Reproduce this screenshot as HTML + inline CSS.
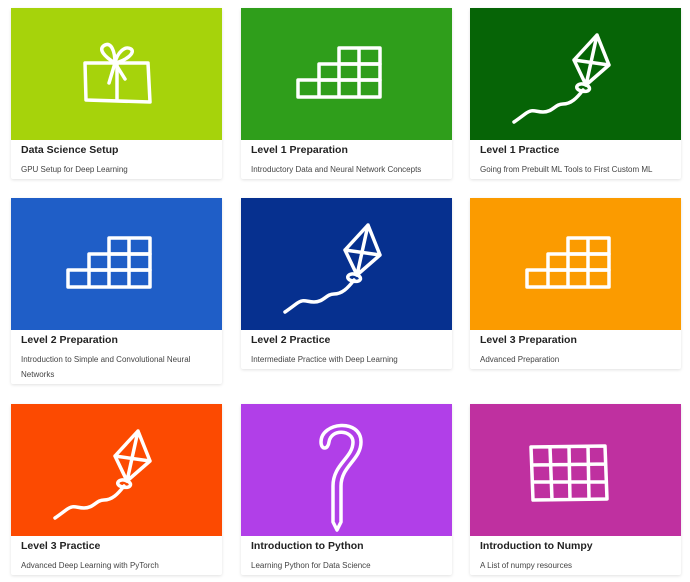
<!DOCTYPE html>
<html><head><meta charset="utf-8"><style>
body{margin:0;background:#fff;font-family:"Liberation Sans",sans-serif;width:690px;height:582px;overflow:hidden;position:relative}
.card{position:absolute;width:211px;background:#fff;box-shadow:0 1px 3px rgba(0,0,0,.12);border-radius:2px}
.img{height:132px;position:relative}
.img svg{position:absolute;left:0;top:0}
.t{font-weight:bold;font-size:10.5px;color:#222;padding:4px 10px 0}
.s{font-size:8px;color:#444;padding:6px 10px 0;line-height:15px}
</style></head><body>
<svg width="0" height="0" style="position:absolute"><defs>
<g id="stairs" fill="none" stroke="#fff" stroke-width="3.5" stroke-linejoin="round">
<rect x="57" y="72" width="82" height="17"/><line x1="78" y1="72" x2="78" y2="89"/><line x1="98" y1="72" x2="98" y2="89"/><line x1="118" y1="72" x2="118" y2="89"/>
<rect x="78" y="56" width="61" height="16"/><line x1="98" y1="56" x2="98" y2="72"/><line x1="118" y1="56" x2="118" y2="72"/>
<rect x="98" y="40" width="41" height="16"/><line x1="118" y1="40" x2="118" y2="56"/>
</g>
<g id="kite" fill="none" stroke="#fff" stroke-width="3.5" stroke-linejoin="round" stroke-linecap="round">
<path d="M127 27 L104 52 L116 77 L139 57 Z M127 27 L116 77 M104 52 L139 57"/>
<path d="M116 77 c-8 -4 -14 4 -4 6 c8 2 10 -4 4 -6 M113 82 c-6 8 -12 14 -20 14 c-8 0 -10 8 -20 8 c-8 0 -10 -4 -18 2 c-4 3 -8 6 -11 8"/>
</g>
<g id="gift" fill="none" stroke="#fff" stroke-width="3.5" stroke-linejoin="round" stroke-linecap="round">
<path d="M74 55 L137 55 L139 94 L75 92 Z M106 55 L106 93"/>
<path d="M104 55 c-10 -6 -18 -14 -10 -18 c6 -3 10 6 10 18 c2 -10 10 -18 16 -14 c5 4 -6 12 -16 14 M104 55 l-6 20 M104 55 l10 16"/>
</g>
<g id="grid" fill="none" stroke="#fff" stroke-width="3.5" stroke-linejoin="round">
<path d="M61 43 L135 42 L137 95 L63 96 Z M62 61 L136 60 M62 78 L136 78 M80 43 L82 96 M99 43 L100 96 M118 42 L119 95"/>
</g>
<g id="q" fill="none" stroke="#fff" stroke-width="3.5" stroke-linejoin="round" stroke-linecap="round">
<path d="M80 38 c0 -20 40 -24 40 0 c0 18 -20 24 -20 44 l0 36 l-4 8 l-4 -8 l0 -36 c0 -22 20 -28 20 -44 c0 -12 -22 -14 -24 0 c-1 8 -8 8 -8 0z"/>
</g>
</defs></svg>

<div class="card" style="left:11px;top:8px;height:171px"><div class="img" style="background:#a6d30b"><svg width="211" height="132"><use href="#gift"/></svg></div><div class="t">Data Science Setup</div><div class="s">GPU Setup for Deep Learning</div></div>
<div class="card" style="left:241px;top:8px;height:171px"><div class="img" style="background:#2f9e1b"><svg width="211" height="132"><use href="#stairs"/></svg></div><div class="t">Level 1 Preparation</div><div class="s">Introductory Data and Neural Network Concepts</div></div>
<div class="card" style="left:470px;top:8px;height:171px"><div class="img" style="background:#066406"><svg width="211" height="132"><use href="#kite"/></svg></div><div class="t">Level 1 Practice</div><div class="s">Going from Prebuilt ML Tools to First Custom ML</div></div>

<div class="card" style="left:11px;top:198px;height:186px"><div class="img" style="background:#1f5ec7"><svg width="211" height="132"><use href="#stairs"/></svg></div><div class="t">Level 2 Preparation</div><div class="s">Introduction to Simple and Convolutional Neural Networks</div></div>
<div class="card" style="left:241px;top:198px;height:171px"><div class="img" style="background:#06308f"><svg width="211" height="132"><use href="#kite"/></svg></div><div class="t">Level 2 Practice</div><div class="s">Intermediate Practice with Deep Learning</div></div>
<div class="card" style="left:470px;top:198px;height:171px"><div class="img" style="background:#fb9b00"><svg width="211" height="132"><use href="#stairs"/></svg></div><div class="t">Level 3 Preparation</div><div class="s">Advanced Preparation</div></div>

<div class="card" style="left:11px;top:404px;height:171px"><div class="img" style="background:#fc4a01"><svg width="211" height="132"><use href="#kite"/></svg></div><div class="t">Level 3 Practice</div><div class="s">Advanced Deep Learning with PyTorch</div></div>
<div class="card" style="left:241px;top:404px;height:171px"><div class="img" style="background:#b13fe8"><svg width="211" height="132"><use href="#q"/></svg></div><div class="t">Introduction to Python</div><div class="s">Learning Python for Data Science</div></div>
<div class="card" style="left:470px;top:404px;height:171px"><div class="img" style="background:#bf30a0"><svg width="211" height="132"><use href="#grid"/></svg></div><div class="t">Introduction to Numpy</div><div class="s">A List of numpy resources</div></div>
</body></html>
